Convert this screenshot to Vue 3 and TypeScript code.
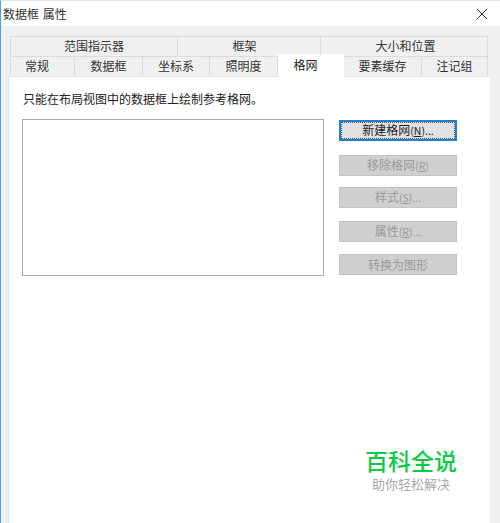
<script setup lang="ts">
interface Tab { label: string; width: number; active?: boolean; shift?: 'left' | 'mid' | 'right' }
const topTabs: Tab[] = [
  { label: '范围指示器', width: 168 },
  { label: '框架', width: 143, shift: 'mid' },
  { label: '大小和位置', width: 167, shift: 'right' },
]
const bottomTabs: Tab[] = [
  { label: '常规', width: 65, shift: 'left' },
  { label: '数据框', width: 68 },
  { label: '坐标系', width: 67 },
  { label: '照明度', width: 68 },
  { label: '格网', width: 66, active: true, shift: 'left' },
  { label: '要素缓存', width: 78 },
  { label: '注记组', width: 66 },
]
interface Action { label: string; key?: string; suffix?: string }
const disabledActions: Action[] = [
  { label: '移除格网', key: 'R', suffix: '' },
  { label: '样式', key: 'S', suffix: '...' },
  { label: '属性', key: 'R', suffix: '...' },
  { label: '转换为图形' },
]
</script>

<template>
  <div class="window">
    <header class="titlebar">
      <span class="title">数据框 属性</span>
      <svg class="close" width="12" height="12" viewBox="0 0 12 12">
        <path d="M1 1L11 11M11 1L1 11" stroke="#333" stroke-width="1" fill="none" />
      </svg>
    </header>
    <div class="body">
      <div class="tabs">
        <div class="tabrow top">
          <div
            v-for="t in topTabs"
            :key="t.label"
            class="tab"
            :class="t.shift"
            :style="{ width: t.width + 'px' }"
          >{{ t.label }}</div>
        </div>
        <div class="tabrow bottom">
          <div
            v-for="t in bottomTabs"
            :key="t.label"
            class="tab"
            :class="[t.shift, { active: t.active }]"
            :style="{ width: t.width + 'px' }"
          >{{ t.label }}</div>
        </div>
      </div>
      <main class="panel">
        <p class="hint">只能在布局视图中的数据框上绘制参考格网。</p>
        <div class="content">
          <div class="list"></div>
          <div class="actions">
            <button class="btn primary"><span class="focus">新建格网<small>(<u>N</u>)...</small></span></button>
            <button v-for="a in disabledActions" :key="a.label" class="btn" disabled>
              {{ a.label }}<small v-if="a.key">(<u>{{ a.key }}</u>){{ a.suffix }}</small>
            </button>
          </div>
        </div>
        <div class="brand">
          <div class="brand-name">百科全说</div>
          <div class="brand-sub">助你轻松解决</div>
        </div>
      </main>
    </div>
  </div>
</template>

<style>
html, body { margin: 0; padding: 0; background: #fff; }
</style>

<style scoped>
.window {
  width: 500px;
  height: 523px;
  box-sizing: border-box;
  border-left: 1px solid #4aa3e8;
  border-top: 1px solid #d8e6f2;
  display: flex;
  flex-direction: column;
  font-family: "Noto Sans CJK SC", "Noto Sans", sans-serif;
  color: #222;
  overflow: hidden;
}
.titlebar {
  height: 25px;
  flex: none;
  background: #fff;
  display: flex;
  align-items: center;
  justify-content: space-between;
  padding: 0 12px 0 2px;
  font-size: 12px;
  color: #333;
}
.title { line-height: 24px; word-spacing: 1px; }
.body {
  flex: 1;
  background: #f0f0f0;
  padding: 10px 10px 0 7px;
  display: flex;
  flex-direction: column;
  min-height: 0;
}
.tabs { padding-left: 2px; flex: none; }
.tabrow { display: flex; height: 20px; }
.tab {
  box-sizing: border-box;
  height: 20px;
  background: #f0f0f0;
  border: 1px solid #dcdcdc;
  border-left-width: 0;
  border-bottom: 0;
  font-size: 12px;
  line-height: 17px;
  text-align: center;
  color: #333;
}
.tab:first-child { border-left-width: 1px; }
.tab.left { padding-right: 11px; }
.tab.mid { padding-right: 9px; }
.tab.right { padding-left: 3px; }
.tabrow.bottom { position: relative; z-index: 1; }
.tab.active {
  height: 23px;
  margin-top: -2px;
  background: #fff;
  border: 0;
  line-height: 21px;
  color: #222;
}
.panel {
  flex: 1;
  background: #fff;
  padding: 12px 14px 0 13px;
  display: flex;
  flex-direction: column;
  border-left: 1px solid #e4e4e4;
  border-top: 1px solid #e4e4e4;
  min-height: 0;
}
.hint {
  margin: 0;
  padding-left: 1px;
  font-size: 12px;
  line-height: 20px;
  color: #222;
}
.content {
  display: flex;
  gap: 15px;
  margin-top: 10px;
}
.list {
  width: 302px;
  height: 157px;
  box-sizing: border-box;
  border: 1.5px solid #a8a8ae;
  background: #fff;
  flex: none;
}
.actions {
  display: flex;
  flex-direction: column;
  width: 118px;
}
.btn {
  width: 118px;
  height: 21px;
  box-sizing: border-box;
  padding: 0;
  margin-top: 12px;
  background: #cfcfcf;
  border: 1px solid #c4c4c4;
  font-family: inherit;
  font-size: 12px;
  line-height: 18px;
  color: #9a9a9a;
  text-align: center;
}
.btn:nth-child(2) { margin-top: 14px; }
.btn:nth-child(3) { margin-top: 11px; }
.btn:nth-child(4) { margin-top: 13px; }
.btn small { font-size: 10.5px; }
.btn.primary {
  margin-top: 1px;
  background: #e1e1e1;
  border: 2px solid #1e7fd4;
  color: #222;
}
.focus {
  display: block;
  height: 100%;
  box-sizing: border-box;
  border: 1px dotted #555;
  line-height: 13px;
}
.brand {
  margin-top: auto;
  align-self: flex-end;
  width: 92px;
  margin-right: 19px;
  margin-bottom: 31px;
  text-align: center;
}
.brand-name {
  font-size: 23px;
  line-height: 23px;
  margin-bottom: 4px;
  color: #0ecb45;
  font-weight: 500;
  white-space: nowrap;
}
.brand-sub {
  font-size: 13px;
  line-height: 16px;
  color: #a8a8a8;
  white-space: nowrap;
}
</style>
